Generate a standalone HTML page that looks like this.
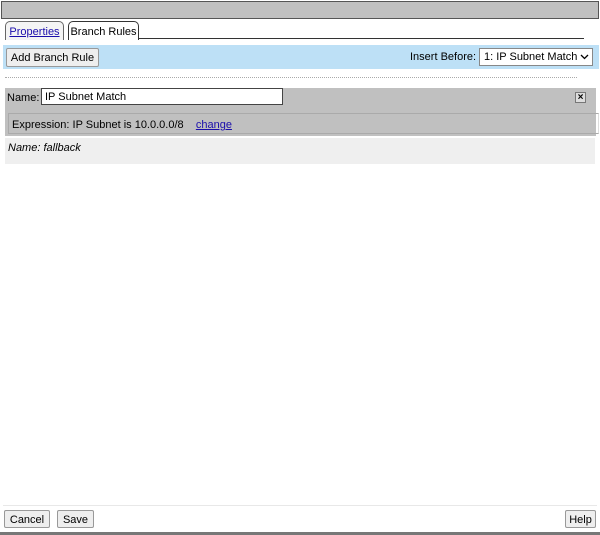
<!DOCTYPE html>
<html><head><style>
*{box-sizing:border-box}
body{margin:0;width:600px;height:535px;position:relative;font-family:"Liberation Sans",sans-serif;font-size:11px;background:#fff;overflow:hidden}
.a{position:absolute;white-space:nowrap}
.btn{position:absolute;white-space:nowrap;background:#eee;border:1px solid #999;border-radius:2px;text-align:center;line-height:17px;color:#000}
a{color:#1a0dab}
</style></head><body>
<div class="a" style="left:1px;top:1px;width:598px;height:18px;background:#c0c0c0;border:1px solid #555"></div>
<div class="a" style="left:5px;top:21px;width:59px;height:19px;border:1px solid #666;border-bottom:none;border-radius:5px 5px 0 0;background:#f4f4f4;line-height:21px;text-align:center"><a href="#">Properties</a></div>
<div class="a" style="left:68px;top:21px;width:71px;height:19px;border:1px solid #333;border-bottom:none;border-radius:5px 5px 0 0;background:#fff;line-height:21px;text-align:center">Branch Rules</div>
<div class="a" style="left:138px;top:38px;width:446px;height:1px;background:#333"></div>
<div class="a" style="left:3px;top:45px;width:596px;height:24px;background:#bde0f6"></div>
<div class="btn" style="left:6px;top:48px;width:93px;height:19px;line-height:19px">Add Branch Rule</div>
<div class="a" style="left:410px;top:51px">Insert Before:</div>
<div class="a" style="left:479px;top:48px;width:114px;height:18px;background:#fff;border:1px solid #888;padding-left:4px;line-height:17px">1: IP Subnet Match
<svg class="a" style="right:3px;top:5px" width="9" height="6"><path d="M1 1L4.5 4.5L8 1" stroke="#000" fill="none" stroke-width="1.3"/></svg></div>
<div class="a" style="left:5px;top:77px;width:572px;border-top:1px dotted #aaa"></div>
<div class="a" style="left:5px;top:88px;width:591px;height:48px;background:#c0c0c0"></div>
<div class="a" style="left:7px;top:92px">Name:</div>
<div class="a" style="left:41px;top:88px;width:242px;height:17px;background:#fff;border:1px solid #444;padding-left:3px;line-height:17px">IP Subnet Match</div>
<div class="a" style="left:575px;top:92px;width:11px;height:11px;border:1px solid #777;background:#ddd;font-size:10px;line-height:9px;text-align:center;font-weight:bold">×</div>
<div class="a" style="left:8px;top:113px;width:591px;height:21px;border:1px solid #aaa;border-right-color:#ddd"></div>
<div class="a" style="left:12px;top:119px">Expression: IP Subnet is 10.0.0.0/8 &nbsp;&nbsp;&nbsp;<a href="#">change</a></div>
<div class="a" style="left:5px;top:138px;width:590px;height:26px;background:#efefef"></div>
<div class="a" style="left:8px;top:142px;font-style:italic">Name: fallback</div>
<div class="a" style="left:3px;top:505px;width:594px;height:1px;background:#e8e8e8"></div>
<div class="btn" style="left:4px;top:510px;width:46px;height:18px;line-height:18px">Cancel</div>
<div class="btn" style="left:57px;top:510px;width:37px;height:18px;line-height:18px">Save</div>
<div class="btn" style="left:565px;top:510px;width:31px;height:18px;line-height:18px">Help</div>
<div class="a" style="left:0;top:532px;width:600px;height:3px;background:#777"></div>
</body></html>
